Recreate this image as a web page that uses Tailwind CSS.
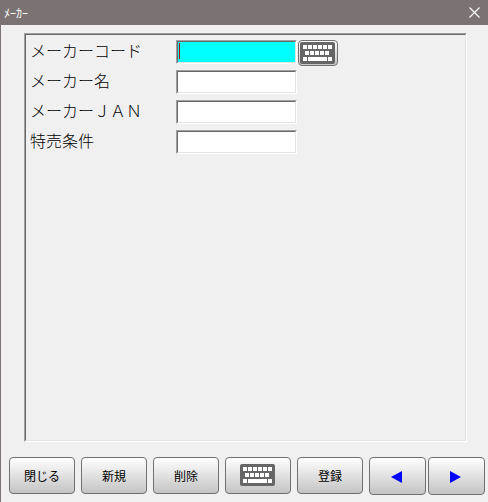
<!DOCTYPE html>
<html lang="ja">
<head>
    <meta charset="UTF-8">
    <meta name="viewport" content="width=device-width, initial-scale=1.0">
    <title>メーカー</title>
    <script src="https://cdn.jsdelivr.net/npm/@tailwindcss/browser@4"></script>
</head>
<body class="min-h-screen flex flex-col bg-[#f0f0f0] border-l border-[#7b7373] text-black font-['Noto_Sans_CJK_JP',sans-serif]">
    <!-- Keyboard symbol, shared by two buttons -->
    <svg class="hidden">
        <symbol id="keyboard" viewBox="0 0 35 22">
            <rect width="35" height="22" rx="2" fill="#666666"/>
            <path fill="#ffffff" d="M3 3h4v4h-4zM8 3h4v4h-4zM13 3h4v4h-4zM18 3h4v4h-4zM23 3h4v4h-4zM28 3h4v4h-4zM5 9h4v4h-4zM10 9h4v4h-4zM15 9h4v4h-4zM20 9h4v4h-4zM25 9h4v4h-4zM3 15h4v4h-4zM8 15h19v4h-19zM28 15h4v4h-4z"/>
        </symbol>
    </svg>

    <!-- Title bar -->
    <header class="h-[25px] flex items-center justify-between bg-[#7b7373] text-white pl-[3px] pr-2">
        <h1 class="text-xs leading-6">ﾒｰｶｰ</h1>
        <button type="button" aria-label="閉じる" class="w-[11px] h-[11px]">
            <svg viewBox="0 0 11 11" class="w-[11px] h-[11px]" stroke="#ffffff" stroke-width="1.2" fill="none"><path d="M.5 .5l10 10M10.500 .5l-10 10"/></svg>
        </button>
    </header>

    <form class="flex-1 flex flex-col pt-2">
        <!-- Fields -->
        <main class="flex-1 flex ml-[23px] mr-[21px] border border-t-[#a0a0a0] border-l-[#a0a0a0] border-b-white border-r-white">
            <div class="flex-1 border border-t-[#696969] border-l-[#696969] border-b-[#e3e3e3] border-r-[#e3e3e3] pl-1 pt-[5px]">
                <div class="grid grid-cols-[146px_1fr] auto-rows-[24px] gap-y-1.5">
                    <label for="code" class="text-base leading-5 font-light">メーカーコード</label>
                    <div class="flex items-start gap-px">
                        <div class="relative w-[121px] border border-t-[#a0a0a0] border-l-[#a0a0a0] border-b-white border-r-white">
                            <input id="code" type="text" class="block w-full h-[22px] px-1 text-base outline-none bg-[#00ffff] border border-t-[#696969] border-l-[#696969] border-b-[#e3e3e3] border-r-[#e3e3e3]">
                            <span class="absolute left-[2px] top-[2px] w-px h-4 bg-[#c00000]"></span>
                        </div>
                        <button type="button" aria-label="キーボード" class="w-10 h-[26px] flex items-center justify-center pr-px rounded-[4px] border border-[#707070] bg-linear-to-b from-white to-[#c8c8c8]">
                            <svg class="w-[35px] h-[22px]"><use href="#keyboard"/></svg>
                        </button>
                    </div>

                    <label for="name" class="text-base leading-5 font-light">メーカー名</label>
                    <div class="w-[121px] border border-t-[#a0a0a0] border-l-[#a0a0a0] border-b-white border-r-white">
                        <input id="name" type="text" class="block w-full h-[22px] px-1 text-base outline-none bg-white border border-t-[#696969] border-l-[#696969] border-b-[#e3e3e3] border-r-[#e3e3e3]">
                    </div>

                    <label for="jan" class="text-base leading-5 font-light">メーカーＪＡＮ</label>
                    <div class="w-[121px] border border-t-[#a0a0a0] border-l-[#a0a0a0] border-b-white border-r-white">
                        <input id="jan" type="text" class="block w-full h-[22px] px-1 text-base outline-none bg-white border border-t-[#696969] border-l-[#696969] border-b-[#e3e3e3] border-r-[#e3e3e3]">
                    </div>

                    <label for="terms" class="text-base leading-5 font-light">特売条件</label>
                    <div class="w-[121px] border border-t-[#a0a0a0] border-l-[#a0a0a0] border-b-white border-r-white">
                        <input id="terms" type="text" class="block w-full h-[22px] px-1 text-base outline-none bg-white border border-t-[#696969] border-l-[#696969] border-b-[#e3e3e3] border-r-[#e3e3e3]">
                    </div>
                </div>
            </div>
        </main>

        <!-- Buttons -->
        <footer class="grid grid-cols-[354fr_116fr] gap-1.5 items-start pl-2 pr-[3px] pt-[15px] pb-[7px]">
            <div class="grid grid-cols-5 gap-1.5 text-xs">
                <button type="button" class="h-[37px] rounded-[4px] border border-[#707070] bg-linear-to-b from-white to-[#c4c4c4]">閉じる</button>
                <button type="button" class="h-[37px] rounded-[4px] border border-[#707070] bg-linear-to-b from-white to-[#c4c4c4]">新規</button>
                <button type="button" class="h-[37px] rounded-[4px] border border-[#707070] bg-linear-to-b from-white to-[#c4c4c4]">削除</button>
                <button type="button" aria-label="キーボード" class="h-[37px] flex items-center justify-center pr-px pb-px rounded-[4px] border border-[#707070] bg-linear-to-b from-white to-[#c4c4c4]">
                    <svg class="w-[35px] h-[22px]"><use href="#keyboard"/></svg>
                </button>
                <button type="submit" class="h-[37px] rounded-[4px] border border-[#707070] bg-linear-to-b from-white to-[#c4c4c4]">登録</button>
            </div>
            <div class="grid grid-cols-2 gap-0.5">
                <button type="button" aria-label="前へ" class="h-[38px] flex items-center justify-center pt-0.5 pr-0.5 rounded-[4px] border border-[#707070] bg-linear-to-b from-white to-[#c4c4c4]">
                    <svg viewBox="0 0 11 12" class="w-[11px] h-3" fill="#0000ff"><path d="M11 0v12L0 6z"/></svg>
                </button>
                <button type="button" aria-label="次へ" class="h-[38px] flex items-center justify-center pt-0.5 pr-0.5 rounded-[4px] border border-[#707070] bg-linear-to-b from-white to-[#c4c4c4]">
                    <svg viewBox="0 0 11 12" class="w-[11px] h-3" fill="#0000ff"><path d="M0 0v12l11-6z"/></svg>
                </button>
            </div>
        </footer>
    </form>
</body>
</html>
